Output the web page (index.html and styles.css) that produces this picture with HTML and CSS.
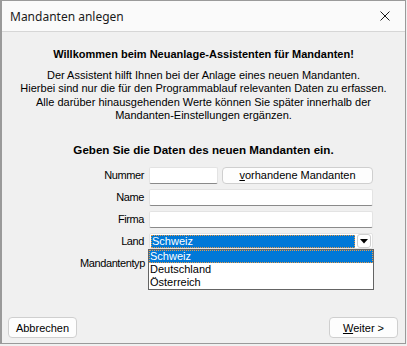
FILE: index.html
```html
<!DOCTYPE html>
<html lang="de">

<head>
  <meta charset="UTF-8">
  <meta name="viewport" content="width=device-width, initial-scale=1.0">
  <title>Mandanten anlegen</title>
  <link rel="stylesheet" href="styles.css">
</head>

<body>
  <div class="window">
    <div class="titlebar">
      <span class="titlebar__text">Mandanten anlegen</span>
      <svg class="titlebar__close" width="10" height="10" viewBox="0 0 10 10">
        <path d="M0.5 0.5 L9.5 9.5 M9.5 0.5 L0.5 9.5" stroke="#1a1a1a" stroke-width="1" fill="none" />
      </svg>
    </div>

    <div class="content">
      <h1 class="welcome">Willkommen beim Neuanlage-Assistenten für Mandanten!</h1>
      <p class="intro">
        Der Assistent hilft Ihnen bei der Anlage eines neuen Mandanten.<br>
        Hierbei sind nur die für den Programmablauf relevanten Daten zu erfassen.<br>
        Alle darüber hinausgehenden Werte können Sie später innerhalb der<br>
        Mandanten-Einstellungen ergänzen.
      </p>
      <h2 class="prompt">Geben Sie die Daten des neuen Mandanten ein.</h2>

      <form class="fields" action="">
        <label for="nummer">Nummer</label>
        <div class="fields__row">
          <input id="nummer" class="textbox textbox--short" type="text">
          <button type="button" class="button button--wide"><u>v</u>orhandene Mandanten</button>
        </div>

        <label for="name">Name</label>
        <input id="name" class="textbox" type="text">

        <label for="firma">Firma</label>
        <input id="firma" class="textbox" type="text">

        <label>Land</label>
        <div class="combo">
          <span class="combo__value">Schweiz</span>
          <span class="combo__arrow">
            <svg width="8" height="5" viewBox="0 0 8 5"><path d="M0 0 H8 L4 4.5 Z" fill="#000" /></svg>
          </span>
          <ul class="combo__list">
            <li class="combo__item combo__item--active">Schweiz</li>
            <li class="combo__item">Deutschland</li>
            <li class="combo__item">Österreich</li>
          </ul>
        </div>

        <label>Mandantentyp</label>
        <div class="combo combo--plain"></div>
      </form>
    </div>

    <div class="footer">
      <button type="button" class="button button--footer">Abbrechen</button>
      <button type="button" class="button button--footer"><u>W</u>eiter &gt;</button>
    </div>
  </div>
</body>

</html>
```

FILE: styles.css
```css
html,
body {
  margin: 0;
  padding: 0;
  background: #f0f0f0;
}

body {
  font-family: "Liberation Sans", Arial, sans-serif;
  font-size: 11px;
  color: #000;
}

.window {
  box-sizing: border-box;
  width: 406px;
  height: 344px;
  border: 1px solid #9a9a9a;
  border-left-width: 2px;
  display: flex;
  flex-direction: column;
  background: #f0f0f0;
}

.titlebar {
  height: 30px;
  flex: none;
  display: flex;
  align-items: center;
  justify-content: space-between;
  padding: 0 15px 0 8px;
  background: #fafafa;
  border-bottom: 1px solid #d6d6d6;
}

.titlebar__text {
  font-family: "Noto Sans", sans-serif;
  font-size: 12px;
  color: #1a1a1a;
}

.content {
  flex: 1;
  padding-top: 15px;
  position: relative;
}

.welcome {
  margin: 0;
  font-size: 11px;
  font-weight: bold;
  text-align: center;
  line-height: 14px;
}

.intro {
  margin: 8px 0 0;
  text-align: center;
  line-height: 13.4px;
}

.prompt {
  margin: 20px 0 0;
  font-size: 11.6px;
  font-weight: bold;
  text-align: center;
  line-height: 14px;
}

.fields {
  margin: 10px 0 0 78px;
  display: grid;
  grid-template-columns: 64px 224px;
  column-gap: 5px;
  row-gap: 5px;
  grid-auto-rows: 17px;
  align-items: center;
}

.fields label {
  text-align: right;
  white-space: nowrap;
  letter-spacing: -0.4px;
}

.fields__row {
  display: flex;
  gap: 4px;
  height: 17px;
}

.textbox {
  box-sizing: border-box;
  height: 17px;
  width: 224px;
  margin: 0;
  padding: 0 2px;
  border: 1px solid #e3e3e3;
  border-bottom-color: #8a8a8a;
  border-radius: 2px;
  background: #fff;
  font: inherit;
}

.textbox--short {
  width: 69px;
}

.button {
  box-sizing: border-box;
  margin: 0;
  padding: 0;
  border: 1px solid #cfcfcf;
  border-radius: 4px;
  background: #fdfdfd;
  font: inherit;
  color: #000;
}

.button--wide {
  width: 151px;
  height: 17px;
}

.button--footer {
  width: 69px;
  height: 21px;
}

.combo {
  box-sizing: border-box;
  position: relative;
  height: 16px;
  width: 224px;
  display: flex;
  align-items: stretch;
  gap: 2px;
  padding: 1px 1px 0 1px;
  background: #fff;
  border: 1px solid #e3e3e3;
  border-radius: 2px;
}

.combo__value {
  flex: 1;
  background: #0078d7;
  color: #fff;
  line-height: 13px;
  padding-left: 1px;
  outline: 1px dotted #e39a4a;
  outline-offset: -1px;
}

.combo__arrow {
  box-sizing: border-box;
  width: 14px;
  height: 14px;
  margin-top: -1px;
  display: flex;
  align-items: center;
  justify-content: center;
  border: 1px solid #cfcfcf;
  border-radius: 3px;
  background: #fff;
}

.combo__list {
  position: absolute;
  top: 15px;
  left: -2px;
  right: -2px;
  z-index: 5;
  margin: 0;
  padding: 0;
  list-style: none;
  background: #fff;
  border: 1px solid #646464;
}

.combo__item {
  height: 13px;
  line-height: 13px;
  padding-left: 1px;
}

.combo__item--active {
  background: #0078d7;
  color: #fff;
  outline: 1px dotted #e39a4a;
  outline-offset: -1px;
}

.footer {
  flex: none;
  display: flex;
  justify-content: space-between;
  padding: 0 7px 5px 6px;
}
```
